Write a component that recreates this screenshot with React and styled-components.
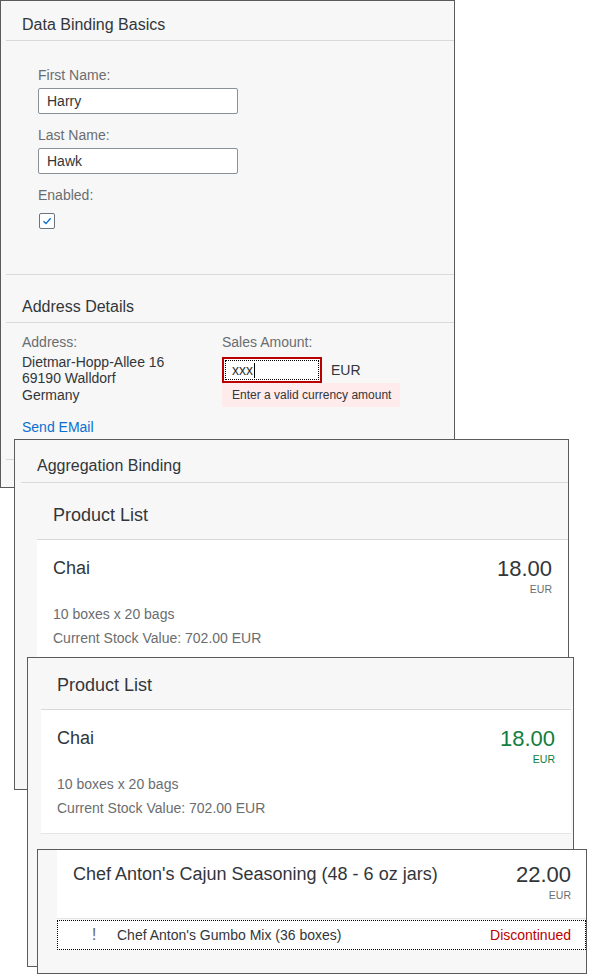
import React from "react";
import styled, { createGlobalStyle } from "styled-components";

const GlobalStyle = createGlobalStyle`
  html, body {
    margin: 0;
    padding: 0;
    background: #ffffff;
  }
  body {
    font-family: "Liberation Sans", Arial, sans-serif;
    color: #32363a;
  }
`;

// the picture is a stack of overlapping screenshots, each one a window on a blank desktop
const Desktop = styled.main`
  position: relative;
  width: 591px;
  height: 979px;
  overflow: hidden;
  background: #ffffff;
`;

const Window = styled.section`
  position: absolute;
  left: ${p => p.$x}px;
  top: ${p => p.$y}px;
  width: ${p => p.$w}px;
  height: ${p => p.$h}px;
  box-sizing: border-box;
  border: 1px solid #5b5b5b;
  background: #f7f7f7;
  overflow: hidden;
  display: flex;
  flex-direction: column;
`;

const Panel = styled.div`
  margin-left: ${p => p.$indent || 0}px;
  margin-right: ${p => p.$right || 0}px;
  display: flex;
  flex-direction: column;
`;

const PanelHeader = styled.header`
  height: ${p => p.$h}px;
  flex: none;
  display: flex;
  align-items: flex-end;
  padding: 0 16px ${p => p.$pb || 6}px;
  box-sizing: content-box;
  border-bottom: 1px solid #d9d9d9;
`;

const Title = styled.h2`
  margin: 0;
  font-weight: normal;
  font-size: ${p => (p.$large ? 18 : 16)}px;
  line-height: ${p => (p.$large ? 22 : 18)}px;
  color: #32363a;
`;

const FormBody = styled.div`
  height: 234px;
  box-sizing: border-box;
  padding: 26px 0 0 32px;
  border-bottom: 1px solid #d9d9d9;
  display: flex;
  flex-direction: column;
  align-items: flex-start;
`;

const Field = styled.div`
  display: flex;
  flex-direction: column;
  align-items: flex-start;
  gap: 5px;
  margin-bottom: 13px;
`;

const Label = styled.span`
  font-size: 14px;
  line-height: 16px;
  color: #6a6d70;
`;

const TextBox = styled.div`
  width: 200px;
  height: 26px;
  box-sizing: border-box;
  border: 1px solid #89919a;
  border-radius: 2px;
  background: #ffffff;
  padding: 0 8px;
  display: flex;
  align-items: center;
  font-size: 14px;
  color: #32363a;
`;

const CheckBox = styled.div`
  width: 16px;
  height: 16px;
  box-sizing: border-box;
  margin: 5px 0 0 1px;
  border: 1px solid #6a7380;
  border-radius: 2px;
  background: #ffffff;
  display: flex;
  align-items: center;
  justify-content: center;
`;

const AddressBody = styled.div`
  padding: 11px 0 24px 16px;
  border-bottom: 1px solid #d9d9d9;
  display: flex;
  flex-direction: column;
  align-items: flex-start;
`;

const Columns = styled.div`
  display: grid;
  grid-template-columns: 200px 200px;
`;

const Column = styled.div`
  display: flex;
  flex-direction: column;
  align-items: flex-start;
`;

const AddressText = styled.div`
  margin-top: 4px;
  font-size: 14px;
  line-height: 16.3px;
  color: #32363a;
`;

const InputRow = styled.div`
  margin-top: 7px;
  display: flex;
  align-items: center;
`;

const ErrorInput = styled.div`
  width: 100px;
  height: 26px;
  box-sizing: border-box;
  border: 2px solid #bb0000;
  background: #ffffff;
  padding: 1px;
`;

const FocusRing = styled.div`
  height: 100%;
  box-sizing: border-box;
  border: 1px dotted #000000;
  padding-left: 6px;
  display: flex;
  align-items: center;
  font-size: 14px;
  color: #32363a;
`;

const Caret = styled.span`
  width: 1px;
  height: 15px;
  background: #000000;
  margin-left: 1px;
`;

const Unit = styled.span`
  margin-left: 9px;
  font-size: 14px;
  color: #32363a;
`;

const ErrorMessage = styled.div`
  width: 178px;
  height: 24px;
  box-sizing: border-box;
  padding-left: 10px;
  display: flex;
  align-items: center;
  background: #ffebeb;
  font-size: 12px;
  color: #32363a;
`;

const Link = styled.a`
  margin-top: 12px;
  font-size: 14px;
  line-height: 16px;
  color: #0a6ed1;
  text-decoration: none;
`;

const ProductItem = styled.div`
  background: #ffffff;
  padding: ${p => (p.$compact ? "13px 15px 0 16px" : "17px 16px 17px")};
  height: ${p => (p.$compact ? "69px" : "auto")};
  box-sizing: border-box;
  border-bottom: 1px solid #e5e5e5;
  display: flex;
  flex-direction: column;
`;

const ItemTop = styled.div`
  display: flex;
  justify-content: space-between;
  align-items: flex-start;
`;

const ItemTitle = styled.span`
  font-size: 18px;
  line-height: 22px;
  color: #32363a;
`;

const PriceBox = styled.div`
  display: flex;
  flex-direction: column;
  align-items: flex-end;
  color: ${p => (p.$state === "success" ? "#107e3e" : "#32363a")};
`;

const Price = styled.span`
  font-size: 22px;
  line-height: 24px;
`;

const Currency = styled.span`
  margin-top: 2px;
  font-size: 10.5px;
  line-height: 12px;
  color: ${p => (p.$state === "success" ? "#107e3e" : "#6a6d70")};
`;

const Attributes = styled.div`
  margin-top: 11px;
  display: flex;
  flex-direction: column;
  gap: 7.5px;
`;

const Attribute = styled.span`
  font-size: 14px;
  line-height: 16px;
  color: #6a6d70;
`;

const StatusRow = styled.div`
  margin-top: 1px;
  height: 30px;
  box-sizing: border-box;
  border: 1px dotted #000000;
  background: #ffffff;
  padding: 0 14px 0 24px;
  display: flex;
  align-items: center;
  font-size: 14px;
`;

const WarnIcon = styled.span`
  width: 24px;
  text-align: center;
  font-size: 17px;
  line-height: 18px;
  color: #6a6d70;
`;

const RowText = styled.span`
  margin-left: 11px;
  flex: 1;
  color: #32363a;
`;

const StatusText = styled.span`
  color: #bb0000;
`;

const Product = ({ title, price, state, attrs, compact }) => (
  <ProductItem $compact={compact}>
    <ItemTop>
      <ItemTitle>{title}</ItemTitle>
      <PriceBox $state={state}>
        <Price>{price}</Price>
        <Currency $state={state}>EUR</Currency>
      </PriceBox>
    </ItemTop>
    {attrs && (
      <Attributes>
        {attrs.map(a => (
          <Attribute key={a}>{a}</Attribute>
        ))}
      </Attributes>
    )}
  </ProductItem>
);

const chaiAttrs = ["10 boxes x 20 bags", "Current Stock Value: 702.00 EUR"];

const App = () => {
  return (
    <>
      <GlobalStyle />
      <Desktop>
        <Window $x={0} $y={0} $w={455} $h={488}>
          <Panel $indent={5}>
            <PanelHeader $h={33}>
              <Title>Data Binding Basics</Title>
            </PanelHeader>
            <FormBody>
              <Field>
                <Label>First Name:</Label>
                <TextBox>Harry</TextBox>
              </Field>
              <Field>
                <Label>Last Name:</Label>
                <TextBox>Hawk</TextBox>
              </Field>
              <Field>
                <Label>Enabled:</Label>
                <CheckBox>
                  <svg width="10" height="10" viewBox="0 0 10 10">
                    <path d="M1.5 5.2 L4 7.6 L8.6 2.2" fill="none" stroke="#0a6ed1" strokeWidth="1.4" />
                  </svg>
                </CheckBox>
              </Field>
            </FormBody>
          </Panel>
          <Panel $indent={5}>
            <PanelHeader $h={41}>
              <Title>Address Details</Title>
            </PanelHeader>
            <AddressBody>
              <Columns>
                <Column>
                  <Label>Address:</Label>
                  <AddressText>
                    Dietmar-Hopp-Allee 16
                    <br />
                    69190 Walldorf
                    <br />
                    Germany
                  </AddressText>
                </Column>
                <Column>
                  <Label>Sales Amount:</Label>
                  <InputRow>
                    <ErrorInput>
                      <FocusRing>
                        xxx
                        <Caret />
                      </FocusRing>
                    </ErrorInput>
                    <Unit>EUR</Unit>
                  </InputRow>
                  <ErrorMessage>Enter a valid currency amount</ErrorMessage>
                </Column>
              </Columns>
              <Link href="#">Send EMail</Link>
            </AddressBody>
          </Panel>
        </Window>

        <Window $x={14} $y={439} $w={555} $h={351}>
          <Panel $indent={6}>
            <PanelHeader $h={35} $pb={7}>
              <Title>Aggregation Binding</Title>
            </PanelHeader>
          </Panel>
          <Panel $indent={22}>
            <PanelHeader $h={43} $pb={13}>
              <Title $large>Product List</Title>
            </PanelHeader>
            <Product title="Chai" price="18.00" attrs={chaiAttrs} />
          </Panel>
        </Window>

        <Window $x={27} $y={657} $w={547} $h={310}>
          <Panel $indent={13} $right={2}>
            <PanelHeader $h={38} $pb={13}>
              <Title $large>Product List</Title>
            </PanelHeader>
            <Product title="Chai" price="18.00" state="success" attrs={chaiAttrs} />
          </Panel>
        </Window>

        <Window $x={37} $y={849} $w={550} $h={125}>
          <Panel $indent={19}>
            <Product compact title="Chef Anton's Cajun Seasoning (48 - 6 oz jars)" price="22.00" />
            <StatusRow>
              <WarnIcon>!</WarnIcon>
              <RowText>Chef Anton's Gumbo Mix (36 boxes)</RowText>
              <StatusText>Discontinued</StatusText>
            </StatusRow>
          </Panel>
        </Window>
      </Desktop>
    </>
  );
};

export default App;
